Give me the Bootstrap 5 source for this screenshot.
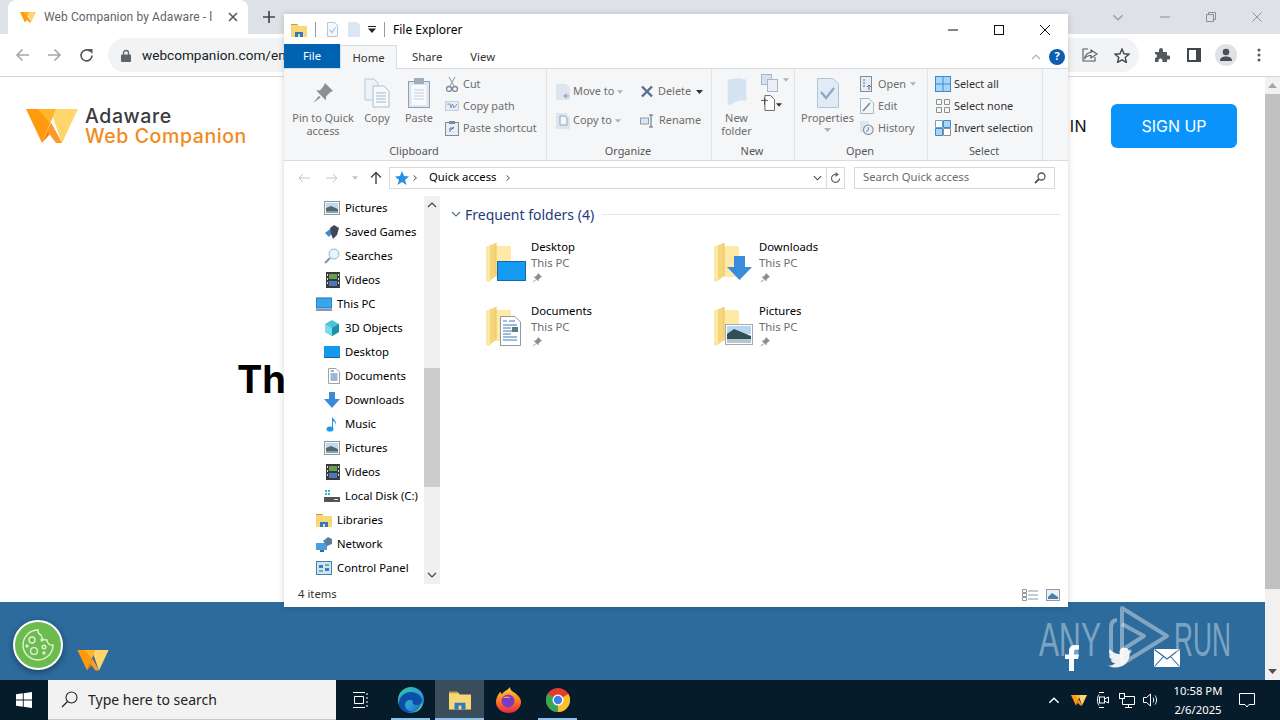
<!DOCTYPE html>
<html lang="en">
<head>
<meta charset="UTF-8">
<title>File Explorer</title>
<link href="https://cdn.jsdelivr.net/npm/bootstrap@5.3.0/dist/css/bootstrap.min.css" rel="stylesheet">
<style>
html, body { width: 1280px; height: 720px; overflow: hidden; margin: 0; background: #fff; }
body { font-family: "Noto Sans", "Liberation Sans", sans-serif; position: relative; }
svg { display: block; flex: none; }

/* small spacing + colour helpers */
.gl1 { margin-left: 1px; } .gl2 { margin-left: 2px; } .gl3 { margin-left: 3px; } .gl5 { margin-left: 5px; }
.gl7 { margin-left: 7px; } .gl9 { margin-left: 9px; } .gl10 { margin-left: 10px; } .gl11 { margin-left: 11px; }
.gl12 { margin-left: 12px; } .gl14 { margin-left: 14px; } .gl16 { margin-left: 16px; } .gl17 { margin-left: 17px; }
.gr4 { margin-right: 4px; }
.cl-mut { color: #9da1a6; } .cl-cap { color: #b0b0b0; } .cl-dim { color: #c3c3c3; } .cl-dk { color: #333; } .cl-sb { color: #444; }
.cl-w { color: #fff; }
.rot { transform: rotate(180deg); }

/* browser */
.br-wrap { height: 680px; }
.br-strip { height: 34px; background: #dee1e6; padding-left: 8px; }
.br-tab { width: 240px; height: 34px; background: #fff; border-radius: 8px 8px 0 0; padding: 0 10px 0 12px; color: #5f6368; }
.br-title { width: 172px; margin-left: 8px; white-space: nowrap; overflow: hidden; font-family: "Roboto", sans-serif; font-size: 12px; letter-spacing: .1px; }
.br-new { margin-left: 14px; }
.br-ctl { margin-left: auto; gap: 36px; padding-right: 18px; }
.br-bar { height: 43px; background: #fff; border-bottom: 1px solid #d3d5d8; padding: 0 15px; }
.br-omni { height: 34px; width: 1031px; margin-left: 14px; background: #f1f3f4; border-radius: 17px; padding: 0 9px 0 13px; }
.br-url { font-family: "Roboto", sans-serif; font-size: 13.6px; color: #202124; margin-left: 11px; white-space: nowrap; }
.br-ext { margin-left: 15px; } .br-pan { margin-left: 17px; }
.br-prof { margin-left: 14px; width: 22px; height: 22px; border-radius: 50%; background: #dfe1e5; }
.br-menu { margin-left: 20px; }
.br-view { height: 603px; }
.pg-main { height: 525px; background: #fff; }
.pg-head { padding: 27px 28px 0 26px; }
.pg-name { font-family: "Inter", sans-serif; font-size: 19.5px; line-height: 20px; font-weight: 500; margin-left: 7px; letter-spacing: .6px; white-space: nowrap; color: #3b3b3e; }
.pg-name span { display: block; color: #f28a1c; }
.pg-signin { margin-left: auto; margin-right: 24px; font-family: "Inter", sans-serif; font-size: 16px; letter-spacing: .5px; color: #111; }
.pg-signup { width: 126px; height: 44px; line-height: 44px; text-align: center; padding: 0; border-radius: 6px; background: #0a94fb; color: #fff; font-family: "Inter", sans-serif; font-size: 16px; text-decoration: none; }
.pg-h { font-family: "Inter", sans-serif; font-weight: 700; font-size: 38px; line-height: 46px; margin: 208px 0 0 237px; color: #000; }
.pg-foot { height: 78px; background: #2c6b9c; position: relative; padding: 48px 85px 0 77px; }
.pg-cookie { position: absolute; left: 13px; top: 18px; width: 50px; height: 50px; border-radius: 50%; background: #6cbb4f; border: 2px solid #fff; box-shadow: 0 2px 6px rgba(0,0,0,.4); }
.pg-wm { position: absolute; left: 1036px; top: 2px; overflow: visible; }
.pg-soc { margin-top: -5px; height: 26px; }
.pg-tw { margin: 0 22px 0 29px; }
.sb-page { width: 15px; background: #f1f1f1; }
.sb-thumb { width: 15px; height: 495px; background: #c1c1c1; }
.sb-btn { height: 17px; }
.sb-up { color: #a3a3a3; } .sb-dn { color: #505050; }

/* explorer window */
.xp { position: absolute; left: 284px; top: 14px; width: 784px; height: 593px; background: #fff; font-size: 11.3px; color: #000; box-shadow: 0 0 6px rgba(0,0,0,.18); }
.xp-title { height: 30px; padding: 1px 0 0 7px; font-size: 12px; }
.xp-sep { width: 1px; height: 15px; background: #9a9a9a; }
.xp-ctl { margin-left: auto; padding-right: 18px; gap: 36px; }
.xp-tabs { height: 24px; color: #333; padding: 1px 3px 0 0; position: relative; z-index: 1; }
.xp-tab { padding: 0 15px; line-height: 24px; }
.xp-file { width: 56px; padding: 0; text-align: center; background: #0063b1; color: #fff; margin-top: -1px; }
.xp-home { width: 57px; padding: 0; text-align: center; background: #f5f6f7; border: 1px solid #dadbdc; border-bottom: 0; height: 24px; }
.xp-view { padding-left: 13px; }
.xp-help { width: 16px; height: 16px; border-radius: 50%; background: #0b5eb0; font-weight: 700; font-size: 11px; margin-left: 8px; }
.xp-rb { height: 93px; background: #f5f6f7; border-top: 1px solid #dadbdc; border-bottom: 1px solid #dadbdc; color: #6d6d6d; font-size: 10.9px; }
.rb-grp { height: 91px; border-right: 1px solid #e2e3e5; }
.rb-body { height: 73px; }
.rb-lbl { text-align: center; color: #555; line-height: 17px; padding-right: 2px; }
.rb-big { padding-top: 6px; text-align: center; line-height: 13px; }
.rb-big .rb-ico { height: 36px; padding-top: 3px; }
.rb-col { padding-top: 4px; }
.rb-row { height: 22px; gap: 4px; white-space: nowrap; }
.rb-row2 { height: 29px; gap: 3px; white-space: nowrap; }
.rb-on { color: #333; }
.rb-on .rb-row { gap: 3px; }
.rb-w263 { width: 263px; } .rb-w165 { width: 165px; } .rb-w83 { width: 83px; } .rb-w133 { width: 133px; } .rb-w115 { width: 115px; }
.rb-b38 { width: 38px; } .rb-b46 { width: 46px; } .rb-b49 { width: 49px; } .rb-b65 { width: 65px; } .rb-b70 { width: 70px; }
.rb-clip { padding-left: 4px; } .rb-smcol { margin-left: 3px; }
.rb-org { padding: 8px 0 0 9px; } .rb-orgl { width: 84px; } .rb-col0 { padding-top: 0; }
.rb-newc { padding-top: 5px; } .rb-newr { height: 21px; }
.rb-sel { padding: 4px 0 0 7px; }
.rb-pin { margin-top: 3px; }
.xp-addr { height: 33px; padding: 0 12px 0 14px; margin-bottom: 2px; }
.xp-box { height: 22px; border: 1px solid #d9d9d9; }
.xp-ab { width: 437px; margin-left: 7px; padding-left: 4px; border-right: 0; }
.xp-rf { width: 19px; }
.xp-sr { width: 201px; margin-left: 9px; padding: 0 8px; color: #6d6d6d; }
.xp-panes { height: 388px; }
.xp-nav { width: 140px; overflow: hidden; }
.xp-row { height: 24px; gap: 5px; white-space: nowrap; }
.xp-l1 { padding-left: 40px; }
.xp-l0 { padding-left: 32px; }
.xp-sb { width: 16px; background: #f0f0f0; position: relative; }
.xp-sb-t { height: 119px; background: #cdcdcd; margin-top: 172px; }
.xp-sb-u { position: absolute; left: 3px; top: 6px; }
.xp-sb-d { position: absolute; left: 3px; bottom: 6px; }
.xp-main { width: 628px; padding: 5px 8px 0 11px; }
.xp-grp { color: #1e3a7e; font-size: 14px; height: 26px; gap: 4px; white-space: nowrap; }
.xp-grp i { flex: 1; height: 1px; background: #e5e5e5; margin-left: 4px; }
.xp-grp svg { color: #5a7596; }
.xp-tiles { display: grid; grid-template-columns: 228px 228px; grid-auto-rows: 64px; padding: 12px 0 0 35px; }
.xp-tile { gap: 5px; line-height: 16px; }
.xp-tile svg.tl-ic { margin-top: 4px; }
.xp-tile svg.tl-pn { margin-top: 1px; }
.xp-sub { color: #6d6d6d; }
.xp-stat { height: 23px; padding: 0 8px 2px 14px; color: #333; }

/* taskbar */
.tb { height: 40px; background: #061c2a; color: #fff; }
.tb-win { width: 48px; }
.tb-search { width: 288px; height: 40px; background: #f2f2f2; color: #222; padding-left: 13px; gap: 10px; font-size: 14px; border-bottom: 1px solid #c8c8c8; }
.tb-app { width: 49px; height: 40px; position: relative; }
.tb-tv { width: 50px; }
.tb-act { background: #3a4d5a; }
.tb-run::after { content: ""; position: absolute; left: 5px; right: 5px; bottom: 0; height: 2px; background: #8cc0ea; }
.tb-act.tb-run::after { left: 0; right: 0; }
.tb-tray { margin-left: auto; }
.tb-cell { width: 24px; }
.tb-clock { font-size: 11.3px; line-height: 19px; text-align: center; width: 70px; margin-left: 0; }
.tb-note { margin: 0 25px 0 6px; }
</style>
</head>
<body>

<svg width="0" height="0" class="position-absolute">
  <defs>
    <symbol id="wmark" viewBox="0 0 52 35">
      <polygon points="0,0 30,0 16,34" fill="#ff9a0d"/>
      <polygon points="24,0 52,0 36,34" fill="#ffd66b"/>
      <polygon points="12,0 30,0 24,14" fill="#ffb52e"/>
      <polygon points="16,34 25,14 36,34 30,25 24,25" fill="#f77f00"/>
      <polygon points="25,14 36,34 30,34 21,22" fill="#fb9a2c"/>
    </symbol>
    <symbol id="pin" viewBox="0 0 12 12">
      <path d="M7 1 11 5 9.600 5.600 7.600 7.600 7.400 9.600 2.600 4.800 4.600 4.600 6.400 2.400Z M4 7.400 1 11 4.800 8.200Z" fill="#8a8f94"/>
    </symbol>
    <symbol id="tlfold" viewBox="0 0 40 40">
      <path d="M4 3H25V34H4Z" fill="#ffe9a6"/>
      <path d="M0 4 10 0V33L2 39 0 37Z" fill="#f6d67a"/>
      <path d="M0 4 4 2.400V36L2 39 0 37Z" fill="#fbe9a9"/>
      <path d="M10 0V33" stroke="#e9c25f" fill="none"/>
    </symbol>
    <symbol id="picsm" viewBox="0 0 16 14">
      <rect x=".5" y=".5" width="15" height="13" fill="#f3f6f8" stroke="#8e9aa4"/>
      <rect x="2" y="2" width="12" height="5" fill="#c4d9e8"/>
      <path d="M2 7 7 5 14 8V12H2Z" fill="#52686f"/>
      <path d="M2 10H14V12H2Z" fill="#8aa0aa"/>
    </symbol>
    <symbol id="vidsm" viewBox="0 0 14 16">
      <rect width="14" height="16" fill="#3b3b3b"/>
      <rect x="3" y="2" width="8" height="5" fill="#68a04a"/>
      <rect x="3" y="9" width="8" height="5" fill="#4a79c4"/>
      <path d="M1 2H2V4H1ZM1 6H2V8H1ZM1 10H2V12H1ZM12 2H13V4H12ZM12 6H13V8H12ZM12 10H13V12H12Z" fill="#ddd"/>
    </symbol>
    <symbol id="docsm" viewBox="0 0 12 16">
      <path d="M.5.5H8L11.500 4V15.500H.5Z" fill="#fff" stroke="#9aa3aa"/>
      <path d="M2.500 3H6M2.500 6H9.500M2.500 8H9.500M2.500 10H9.500M2.500 12H9.500" stroke="#3c6fa8"/>
    </symbol>
    <symbol id="dlsm" viewBox="0 0 16 16">
      <path d="M5 0H11V7H16L8 16 0 7H5Z" fill="#3a8ad8"/>
    </symbol>
    <symbol id="fdsm" viewBox="0 0 16 14">
      <path d="M0 1H6L8 3H16V14H0Z" fill="#f8d775"/>
      <path d="M0 1H6L7 2H0Z" fill="#c89a3b"/>
      <rect x="4" y="9" width="8" height="5" fill="#2f78c4"/>
      <rect x="7" y="11" width="2" height="3" fill="#f8d775"/>
    </symbol>
    <symbol id="chev" viewBox="0 0 10 6">
      <path d="M1 1 5 5 9 1" fill="none" stroke="currentColor" stroke-width="1.200"/>
    </symbol>
    <symbol id="caret" viewBox="0 0 7 4">
      <path d="M0 0H7L3.500 4Z" fill="currentColor"/>
    </symbol>
  </defs>
</svg>

<div class="br-wrap d-flex flex-column">
  <!-- tab strip -->
  <div class="br-strip d-flex align-items-center">
    <div class="br-tab d-flex align-items-center">
      <svg width="16" height="11"><use href="#wmark"/></svg>
      <span class="br-title">Web Companion by Adaware - l</span>
      <svg width="10" height="10" class="ms-auto" viewBox="0 0 10 10"><path d="M1 1 9 9M9 1 1 9" stroke="#55585c" stroke-width="1.600"/></svg>
    </div>
    <svg class="br-new" width="14" height="14" viewBox="0 0 14 14"><path d="M7 1V13M1 7H13" stroke="#44474a" stroke-width="1.700"/></svg>
    <div class="br-ctl d-flex align-items-center">
      <svg width="12" height="7" class="cl-mut"><use href="#chev"/></svg>
      <svg width="10" height="10" viewBox="0 0 10 10"><path d="M0 5H10" stroke="#8b8e92"/></svg>
      <svg width="10" height="10" viewBox="0 0 10 10"><path d="M.5 2.500H7.500V9.500H.5ZM2.500 2.500V.5H9.500V7.500H7.500" fill="none" stroke="#8b8e92"/></svg>
      <svg width="10" height="10" viewBox="0 0 11 11"><path d="M.5.5 10.500 10.500M10.500.5 .5 10.500" stroke="#8b8e92"/></svg>
    </div>
  </div>
  <!-- toolbar -->
  <div class="br-bar d-flex align-items-center">
    <svg width="15" height="14" viewBox="0 0 15 14"><path d="M14 7H2M7.500 1.500 2 7l5.500 5.500" fill="none" stroke="#a3a6aa" stroke-width="1.600"/></svg>
    <svg width="15" height="14" class="gl17" viewBox="0 0 15 14"><path d="M1 7H13M7.500 1.500 13 7l-5.500 5.500" fill="none" stroke="#a3a6aa" stroke-width="1.600"/></svg>
    <svg width="15" height="15" class="gl17" viewBox="0 0 15 15"><path d="M13 7.500A5.500 5.500 0 1 1 11 3.200" fill="none" stroke="#55585c" stroke-width="1.700"/><path d="M8.500 1H13.500V6Z" fill="#55585c"/></svg>
    <div class="br-omni d-flex align-items-center">
      <svg width="10" height="13" viewBox="0 0 10 13"><path d="M2.500 6V4a2.500 2.500 0 0 1 5 0V6" fill="none" stroke="#5f6368" stroke-width="1.300"/><rect y="5.500" width="10" height="7.500" rx="1" fill="#5f6368"/></svg>
      <span class="br-url">webcompanion.com/en</span>
      <svg width="16" height="16" class="ms-auto" viewBox="0 0 16 16"><path d="M9 3 15 7 9 11V8.500C5.500 8.500 3.500 10 2.500 12 3 8 5.500 5.700 9 5.500ZM6 2H1V14H13V10" fill="none" stroke="#55585c" stroke-width="1.100"/></svg>
      <svg width="16" height="15" class="gl16" viewBox="0 0 16 15"><path d="M8 1 10 5.800 15 6.200 11.200 9.500 12.400 14.400 8 11.800 3.600 14.400 4.800 9.500 1 6.200 6 5.800Z" fill="none" stroke="#44474a" stroke-width="1.400"/></svg>
    </div>
    <svg width="16" height="16" class="br-ext" viewBox="0 0 16 16"><path d="M1 5H5V3a2 2 0 0 1 4 0V5H13V8.500h1.500a2 2 0 0 1 0 4H13V15H8.500V13.500a2 2 0 0 0-4 0V15H1V11a2 2 0 0 0 0-4Z" fill="#55585c"/></svg>
    <svg width="14" height="14" class="br-pan" viewBox="0 0 14 14"><path d="M1 1H13V13H1Z" fill="#fff" stroke="#44474a" stroke-width="2"/><rect x="9" y="1" width="4" height="12" fill="#44474a"/></svg>
    <div class="br-prof d-flex align-items-center justify-content-center">
      <svg width="14" height="14" viewBox="0 0 14 14"><circle cx="7" cy="4" r="3.300" fill="#4b4f58"/><path d="M1 13C1 9.500 4 8.500 7 8.500S13 9.500 13 13Z" fill="#4b4f58"/></svg>
    </div>
    <svg width="4" height="14" class="br-menu" viewBox="0 0 4 14"><circle cx="2" cy="2" r="1.500" fill="#55585c"/><circle cx="2" cy="7" r="1.500" fill="#55585c"/><circle cx="2" cy="12" r="1.500" fill="#55585c"/></svg>
  </div>
  <!-- page and its scrollbar -->
  <div class="br-view d-flex">
    <div class="flex-grow-1">
      <div class="pg-main">
        <div class="pg-head d-flex align-items-center">
          <svg width="52" height="35"><use href="#wmark"/></svg>
          <div class="pg-name">Adaware<span>Web Companion</span></div>
          <span class="pg-signin">SIGN IN</span>
          <a class="pg-signup" href="#">SIGN UP</a>
        </div>
        <div class="pg-h">Th</div>
      </div>
      <div class="pg-foot d-flex">
        <div class="pg-cookie d-flex align-items-center justify-content-center">
          <svg width="34" height="34" viewBox="0 0 34 34" fill="none" stroke="#dff2d4" stroke-width="1.400"><path d="M17 2A15 15 0 1 0 32 17 5 5 0 0 1 26 12 6 6 0 0 1 20 7 5 5 0 0 1 17 2Z"/><circle cx="11" cy="12" r="3"/><circle cx="13" cy="23" r="3.400"/><circle cx="23" cy="19" r="1.800"/><circle cx="21" cy="12" r="1" fill="#dff2d4"/><circle cx="23" cy="25" r="1" fill="#dff2d4"/><circle cx="6" cy="18" r="1" fill="#dff2d4"/></svg>
        </div>
        <svg width="32" height="21"><use href="#wmark"/></svg>
        <svg class="pg-wm" width="200" height="70" viewBox="0 4 200 70">
          <g fill="none" stroke="#fff" stroke-opacity=".4" stroke-width="4" stroke-linejoin="round">
            <path d="M81 20C76 20 75 24 75 28V56"/>
            <path d="M86 8 131 36 86 64Z"/>
            <path d="M86 24 108 36 86 50"/>
          </g>
          <text x="3" y="56" font-family="Liberation Sans" font-size="48" fill="#fff" fill-opacity=".4" textLength="62" lengthAdjust="spacingAndGlyphs">ANY</text>
          <text x="138" y="56" font-family="Liberation Sans" font-size="48" fill="#fff" fill-opacity=".4" textLength="57" lengthAdjust="spacingAndGlyphs">RUN</text>
        </svg>
        <div class="pg-soc d-flex ms-auto align-items-center">
          <svg width="14" height="26" viewBox="0 0 14 26"><path d="M4 26V14H0V9.500H4V6C4 2 6.500 0 10 0L14 .3V4.500H11.500C9.500 4.500 9 5.500 9 7V9.500H14L13 14H9V26Z" fill="#fff"/></svg>
          <svg width="24" height="20" class="pg-tw" viewBox="0 0 26 21"><path d="M26 2.500 23 3.500 25.500 .5 22.500 2A5 5 0 0 0 13 6.500C8.500 6.300 4.700 4 2 1 .5 3.500 1.200 6.500 3.500 8L1.200 7.400C1.200 10 3 12 5.500 12.600L3 12.700C3.800 15 5.800 16.200 8 16.300 5.500 18.200 3 19 0 18.700 10 24.500 23.500 18.500 23.500 6Z" fill="#f1f1f1"/></svg>
          <svg width="26" height="18" viewBox="0 0 26 18"><rect width="26" height="18" fill="#fff"/><path d="M.5.5 13 10 25.500.5M.5 17.500 9.500 7.500M25.500 17.500 16.500 7.500" fill="none" stroke="#2c6b9c" stroke-width="1.100"/></svg>
        </div>
      </div>
    </div>
    <div class="sb-page d-flex flex-column">
      <div class="sb-btn d-flex align-items-center justify-content-center"><svg width="9" height="5" class="sb-up rot"><use href="#caret"/></svg></div>
      <div class="sb-thumb"></div>
      <div class="sb-btn mt-auto d-flex align-items-center justify-content-center"><svg width="9" height="5" class="sb-dn"><use href="#caret"/></svg></div>
    </div>
  </div>
</div>

<!-- taskbar -->
<div class="tb d-flex align-items-center">
  <div class="tb-win d-flex align-items-center justify-content-center">
    <svg width="16" height="16" viewBox="0 0 16 16"><path d="M0 2.300 6.800 1.300V7.600H0ZM7.700 1.200 16 0V7.600H7.700ZM0 8.400H6.800V14.700L0 13.700ZM7.700 8.400H16V16L7.700 14.800Z" fill="#fff"/></svg>
  </div>
  <div class="tb-search d-flex align-items-center">
    <svg width="17" height="17" viewBox="0 0 17 17"><circle cx="10.500" cy="6.500" r="5.500" fill="none" stroke="#222" stroke-width="1.100"/><path d="M6.500 10.500 1 16" stroke="#222" stroke-width="1.300"/></svg>
    <span>Type here to search</span>
  </div>
  <div class="tb-app tb-tv d-flex align-items-center justify-content-center">
    <svg width="16" height="16" viewBox="0 0 16 16" fill="none" stroke="#fff"><path d="M0 .5H12M0 15.500H12M1.500 4.500H10.500V11.500H1.500ZM14 1V3M14 5V7M14 9V11M14 13V15"/></svg>
  </div>
  <div class="tb-app tb-run d-flex align-items-center justify-content-center">
    <svg width="26" height="26" viewBox="0 0 26 26"><defs><linearGradient id="eg" x1="0" y1="0" x2="1" y2="1"><stop offset="0" stop-color="#37c8a0"/><stop offset=".6" stop-color="#2a9ad8"/><stop offset="1" stop-color="#0b57b0"/></linearGradient></defs><circle cx="13" cy="13" r="13" fill="url(#eg)"/><path d="M1 15C2 8 8 5 13 5 19 5 24 9 24 14 24 17 21 18 18 18 15 18 14 16 15 14 13 12 7 13 7 18 7 22 11 25 15 25 7 27 0 22 1 15Z" fill="#0b4fa8"/><path d="M24 14C25 20 21 25 15 25 20 24 23 20 24 14Z" fill="#7fe36a"/></svg>
  </div>
  <div class="tb-app tb-run tb-act d-flex align-items-center justify-content-center">
    <svg width="22" height="20" viewBox="0 0 16 14"><use href="#fdsm"/></svg>
  </div>
  <div class="tb-app d-flex align-items-center justify-content-center">
    <svg width="25" height="26" viewBox="0 0 25 26"><defs><linearGradient id="fg" x1="0" y1="0" x2="0" y2="1"><stop offset="0" stop-color="#ffd23b"/><stop offset=".55" stop-color="#ff7a1a"/><stop offset="1" stop-color="#e3264a"/></linearGradient></defs><path d="M2 8C3 6 4 5 5 5 5 6 5 7 6 7 8 4 12 3 14 0 14 3 16 4 19 6 23 9 25 12 25 15A12.500 11 0 0 1 0 15C0 12 1 10 2 8Z" fill="url(#fg)"/><circle cx="12" cy="14" r="6.500" fill="#7a3ac8"/><path d="M7 11C9 9 12 9 15 11 12 11 9 11 7 11Z" fill="#ff9a3c"/></svg>
  </div>
  <div class="tb-app tb-run d-flex align-items-center justify-content-center">
    <svg width="24" height="24" viewBox="0 0 24 24"><circle cx="12" cy="12" r="12" fill="#e33b2e"/><path d="M12 12 22.400 6A12 12 0 0 1 12 24Z" fill="#fbc02d"/><path d="M12 12 12 24A12 12 0 0 1 1.600 6Z" fill="#34a853"/><circle cx="12" cy="12" r="5.500" fill="#fff"/><circle cx="12" cy="12" r="4.200" fill="#3f7fe8"/></svg>
  </div>
  <div class="tb-tray d-flex align-items-center">
    <div class="tb-cell d-flex justify-content-center"><svg width="12" height="7" class="cl-w rot"><use href="#chev"/></svg></div>
    <div class="tb-cell gl1 d-flex justify-content-center"><svg width="16" height="11"><use href="#wmark"/></svg></div>
    <div class="tb-cell d-flex justify-content-center"><svg width="14" height="16" viewBox="0 0 14 16" fill="none" stroke="#fff"><path d="M3 2.500C1 5 1 11 3 13.500M3 .5H8M3 15.500H8"/><rect x="3.500" y="5" width="5" height="6"/><path d="M8.500 7 12.500 5V11L8.500 9"/></svg></div>
    <div class="tb-cell d-flex justify-content-center"><svg width="16" height="15" viewBox="0 0 16 15" fill="none" stroke="#fff"><path d="M3.500 3.500H15.500V11.500H3.500ZM9.500 11.500V14M6 14.500H13"/><rect x=".5" y=".5" width="5" height="5" fill="#061c2a"/></svg></div>
    <div class="tb-cell d-flex justify-content-center"><svg width="16" height="14" viewBox="0 0 16 14" fill="none" stroke="#fff"><path d="M.5 4.500H3.500L7.500 1V13L3.500 9.500H.5ZM10 4.500C11 6 11 8 10 9.500M12 2.500C14 5 14 9 12 11.500"/></svg></div>
    <div class="tb-clock">10:58 PM<br>2/6/2025</div>
    <svg width="16" height="15" class="tb-note" viewBox="0 0 16 15" fill="none" stroke="#fff"><path d="M.5.5H15.500V11.500H10L8 14 6 11.500H.5Z"/></svg>
  </div>
</div>

<!-- explorer window, on top of the browser -->
<div class="xp d-flex flex-column">
  <div class="xp-title d-flex align-items-center">
    <svg width="16" height="14"><use href="#fdsm"/></svg>
    <span class="xp-sep ms-2"></span>
    <svg width="11" height="15" class="gl11" viewBox="0 0 11 15"><path d="M.5.5H7.500L10.500 3.500V14.500H.5Z" fill="#f4f7fb" stroke="#b7c6d6"/><path d="M2.500 8 5 10.500 8.500 5.500" fill="none" stroke="#a9c2da" stroke-width="1.200"/></svg>
    <svg width="12" height="15" class="gl10" viewBox="0 0 12 15"><path d="M0 0H9L12 3V15H0Z" fill="#dbe6f0"/></svg>
    <svg width="8" height="7" class="ms-2" viewBox="0 0 8 7"><path d="M0 .5H8" stroke="#222"/><path d="M0 2.500H8L4 7Z" fill="#222"/></svg>
    <span class="xp-sep ms-2"></span>
    <span class="ms-2">File Explorer</span>
    <div class="xp-ctl d-flex align-items-center">
      <svg width="10" height="10" viewBox="0 0 10 10"><path d="M0 5H10" stroke="#111"/></svg>
      <svg width="10" height="10" viewBox="0 0 10 10"><rect x=".5" y=".5" width="9" height="9" fill="none" stroke="#111"/></svg>
      <svg width="10" height="10" viewBox="0 0 10 10"><path d="M0 0 10 10M10 0 0 10" stroke="#111"/></svg>
    </div>
  </div>

  <div class="xp-tabs d-flex align-items-center">
    <div class="xp-tab xp-file">File</div>
    <div class="xp-tab xp-home">Home</div>
    <div class="xp-tab">Share</div>
    <div class="xp-tab xp-view">View</div>
    <svg width="10" height="6" class="ms-auto cl-cap rot"><use href="#chev"/></svg>
    <div class="xp-help d-flex align-items-center justify-content-center text-white">?</div>
  </div>

  <div class="xp-rb d-flex">
    <!-- Clipboard -->
    <div class="rb-grp rb-w263 d-flex flex-column">
      <div class="rb-body rb-clip d-flex">
        <div class="rb-big rb-b70">
          <div class="rb-ico d-flex justify-content-center align-items-start"><svg width="24" height="24" class="rb-pin"><use href="#pin"/></svg></div>Pin to Quick<br>access
        </div>
        <div class="rb-big rb-b38">
          <div class="rb-ico d-flex justify-content-center"><svg width="26" height="30" viewBox="0 0 26 30"><path d="M1 1H10L14 5V22H1Z" fill="#eef3f8" stroke="#b9c5d1"/><path d="M9 8H20L25 13V29H9Z" fill="#f7fafc" stroke="#aebccb"/><path d="M12 15H22M12 18H22M12 21H22M12 24H22" stroke="#a7b7c6"/></svg></div>Copy
        </div>
        <div class="rb-big rb-b46">
          <div class="rb-ico d-flex justify-content-center"><svg width="22" height="30" viewBox="0 0 22 30"><rect x=".5" y="3.500" width="21" height="26" fill="#dde6f0" stroke="#8fa0b2"/><rect x="3.500" y="7" width="15" height="20" fill="#f8fafc"/><rect x="6" y="0" width="10" height="6" fill="#9fadbb"/><path d="M6 12H16M6 15H16M6 18H16M6 21H16" stroke="#c3cfdb"/></svg></div>Paste
        </div>
        <div class="rb-col rb-smcol">
          <div class="rb-row d-flex align-items-center"><svg width="14" height="16" viewBox="0 0 14 16"><path d="M4 1 9 10M10 1 5 10" stroke="#9aa4ae" stroke-width="1.100"/><circle cx="4" cy="13" r="2.500" fill="none" stroke="#7a8b9b" stroke-width="1.300"/><circle cx="10" cy="13" r="2.500" fill="none" stroke="#7a8b9b" stroke-width="1.300"/></svg>Cut</div>
          <div class="rb-row d-flex align-items-center"><svg width="14" height="10" viewBox="0 0 14 10"><rect x=".5" y=".5" width="13" height="9" fill="#e6edf5" stroke="#c3cedb"/><path d="M2 3H5L6 7 7.500 3 9 7 12 3" fill="none" stroke="#7d96b0"/></svg>Copy path</div>
          <div class="rb-row d-flex align-items-center"><svg width="14" height="15" viewBox="0 0 14 15"><rect x=".5" y="1.500" width="13" height="13" fill="#e7eef5" stroke="#7a8b9b"/><rect x="4" y="0" width="6" height="3" fill="#7a8b9b"/><path d="M5 11V7H9M6 9 9 6" stroke="#5a6c7e" fill="none"/></svg>Paste shortcut</div>
        </div>
      </div>
      <div class="rb-lbl">Clipboard</div>
    </div>
    <!-- Organize -->
    <div class="rb-grp rb-w165 d-flex flex-column">
      <div class="rb-body rb-org d-flex">
        <div class="rb-orgl">
          <div class="rb-row2 d-flex align-items-center"><svg width="14" height="16" viewBox="0 0 14 16"><path d="M0 0H10L14 4V16H0Z" fill="#dde6f0"/><path d="M8 12H13M8 12 10.500 9.500M8 12 10.500 14.500" stroke="#7a8da0" fill="none"/></svg>Move to <svg width="6" height="4" class="cl-cap"><use href="#caret"/></svg></div>
          <div class="rb-row2 d-flex align-items-center"><svg width="14" height="16" viewBox="0 0 14 16"><path d="M0 0H10L14 4V16H0Z" fill="#dde6f0"/><path d="M4 3H9L11 5V12H4Z" fill="#f4f7fa" stroke="#94a5b5"/></svg>Copy to <svg width="6" height="4" class="cl-cap"><use href="#caret"/></svg></div>
        </div>
        <div class="rb-col rb-col0">
          <div class="rb-row2 d-flex align-items-center"><svg width="14" height="13" viewBox="0 0 13 13"><path d="M1.500 1.500 11.500 11.500M11.500 1.500 1.500 11.500" stroke="#54708c" stroke-width="2.400"/></svg><span class="gl1">Delete</span> <svg width="7" height="4" class="cl-dk gl2"><use href="#caret"/></svg></div>
          <div class="rb-row2 d-flex align-items-center"><svg width="15" height="14" viewBox="0 0 15 14"><rect x=".5" y="4" width="8" height="6" fill="#dde6f0" stroke="#8a9dae"/><path d="M11 1V13M9 1H13M9 13H13" stroke="#55697c"/></svg><span class="gl1">Rename</span></div>
        </div>
      </div>
      <div class="rb-lbl">Organize</div>
    </div>
    <!-- New -->
    <div class="rb-grp rb-w83 d-flex flex-column">
      <div class="rb-body d-flex">
        <div class="rb-big rb-b49">
          <div class="rb-ico d-flex justify-content-center"><svg width="20" height="28" viewBox="0 0 20 30"><path d="M0 2 12 0 20 2V24H12L2 29 0 28Z" fill="#d5e2ef"/></svg></div>New<br>folder
        </div>
        <div class="rb-col rb-newc">
          <div class="rb-newr d-flex align-items-start"><svg width="22" height="18" viewBox="0 0 22 18"><rect x=".5" y=".5" width="10" height="10" fill="#d7e1ec" stroke="#aab8c6"/><rect x="6.500" y="5.500" width="10" height="12" fill="#eaf0f6" stroke="#aab8c6"/></svg><svg width="6" height="4" class="mt-1 cl-cap"><use href="#caret"/></svg></div>
          <div class="d-flex align-items-start"><svg width="14" height="16" viewBox="0 0 16 18"><path d="M4.500.5H11L15.500 5V17.500H4.500Z" fill="#fff" stroke="#555"/><path d="M0 6H8M4 3V11" stroke="#444"/></svg><svg width="6" height="4" class="mt-2 cl-dk gl1"><use href="#caret"/></svg></div>
        </div>
      </div>
      <div class="rb-lbl">New</div>
    </div>
    <!-- Open -->
    <div class="rb-grp rb-w133 d-flex flex-column">
      <div class="rb-body d-flex">
        <div class="rb-big rb-b65">
          <div class="rb-ico d-flex justify-content-center"><svg width="22" height="30" viewBox="0 0 22 30"><path d="M.5.5H16L21.500 6V29.500H.5Z" fill="#e0ebf5" stroke="#b2c4d6"/><path d="M4 14 9 20 17 10" fill="none" stroke="#8aa8c5" stroke-width="2.200"/></svg></div>Properties
          <svg width="7" height="4" class="mx-auto mt-1 cl-cap"><use href="#caret"/></svg>
        </div>
        <div class="rb-col">
          <div class="rb-row d-flex align-items-center"><svg width="14" height="16" viewBox="0 0 14 16"><rect x=".5" y=".5" width="11" height="15" fill="#e6edf5" stroke="#7f8d9b"/><path d="M3 4H5M3 7H5M3 10H5" stroke="#54708c"/><path d="M9 14V9M7 11 9 9 11 11" stroke="#54708c" fill="none"/></svg><span>Open</span><svg width="6" height="4" class="cl-cap"><use href="#caret"/></svg></div>
          <div class="rb-row d-flex align-items-center"><svg width="14" height="16" viewBox="0 0 14 16"><path d="M.5.5H9L13.500 5V15.500H.5Z" fill="#f2f6fa" stroke="#a8b7c6"/><path d="M3 13 10 5" stroke="#7a8da0" stroke-width="1.600"/></svg><span>Edit</span></div>
          <div class="rb-row d-flex align-items-center"><svg width="14" height="14" viewBox="0 0 16 16"><rect width="10" height="13" fill="#dce6f0"/><circle cx="9.500" cy="10" r="5.500" fill="#e9eff5" stroke="#7a8da0" stroke-width="1.200"/><path d="M9.500 7V10.500L7 12" stroke="#5a6f83" fill="none"/></svg><span>History</span></div>
        </div>
      </div>
      <div class="rb-lbl">Open</div>
    </div>
    <!-- Select -->
    <div class="rb-grp rb-w115 rb-on d-flex flex-column">
      <div class="rb-body rb-sel">
        <div class="rb-row d-flex align-items-center"><svg width="16" height="16" viewBox="0 0 16 16"><rect width="16" height="16" fill="#3a8ad0"/><path d="M1 1H7.500V7.500H1ZM8.500 1H15V7.500H8.500ZM1 8.500H7.500V15H1ZM8.500 8.500H15V15H8.500Z" fill="#a8d6f6"/></svg>Select all</div>
        <div class="rb-row d-flex align-items-center"><svg width="16" height="16" viewBox="0 0 16 16" fill="none" stroke="#8f8f8f"><path d="M1.500 1.500H6.500V6.500H1.500ZM9.500 1.500H14.500V6.500H9.500ZM1.500 9.500H6.500V14.500H1.500ZM9.500 9.500H14.500V14.500H9.500Z"/></svg>Select none</div>
        <div class="rb-row d-flex align-items-center"><svg width="16" height="16" viewBox="0 0 16 16"><path d="M.5.5H7.500V7.500H.5Z" fill="#fff" stroke="#6f9fcb"/><path d="M8.500.5H15.500V7.500H8.500ZM.5 8.500H7.500V15.500H.5Z" fill="#a8d6f6" stroke="#3a8ad0"/><path d="M8.500 8.500H15.500V15.500H8.500Z" fill="#fff" stroke="#8f8f8f"/></svg>Invert selection</div>
      </div>
      <div class="rb-lbl">Select</div>
    </div>
  </div>

  <div class="xp-addr d-flex align-items-center">
    <svg width="12" height="10" viewBox="0 0 12 10"><path d="M12 5H1M5 1 1 5 5 9" fill="none" stroke="#c3c3c3"/></svg>
    <svg width="12" height="10" class="gl16" viewBox="0 0 12 10"><path d="M0 5H11M7 1 11 5 7 9" fill="none" stroke="#c3c3c3"/></svg>
    <svg width="6" height="4" class="gl14 cl-dim"><use href="#caret"/></svg>
    <svg width="12" height="13" class="gl12" viewBox="0 0 12 13"><path d="M6 13V1.500M1 6.500 6 1.500 11 6.500" fill="none" stroke="#444" stroke-width="1.400"/></svg>
    <div class="xp-box xp-ab d-flex align-items-center">
      <svg width="15" height="14" viewBox="0 0 15 14"><path d="M8 0 10 5 15 5.500 11 9 12.500 14 8 11 3.500 14 5 9 1 5.500 6 5Z" fill="#2a8fe0"/></svg>
      <svg width="4" height="6" class="ms-1" viewBox="0 0 4 6"><path d="M.5.5 3.500 3 .5 5.500" fill="none" stroke="#555"/></svg>
      <span class="gl12">Quick access</span>
      <svg width="4" height="6" class="gl9" viewBox="0 0 4 6"><path d="M.5.5 3.500 3 .5 5.500" fill="none" stroke="#555"/></svg>
      <svg width="9" height="6" class="ms-auto cl-sb gr4"><use href="#chev"/></svg>
    </div>
    <div class="xp-box xp-rf d-flex align-items-center justify-content-center">
      <svg width="11" height="12" viewBox="0 0 11 12"><path d="M9.500 6.500A4 4 0 1 1 7 2.700" fill="none" stroke="#666" stroke-width="1.200"/><path d="M5.500 0 9 2.500 5.500 5Z" fill="#666"/></svg>
    </div>
    <div class="xp-box xp-sr d-flex align-items-center">
      <span>Search Quick access</span>
      <svg width="12" height="12" class="ms-auto" viewBox="0 0 12 12"><circle cx="7.500" cy="4.500" r="3.500" fill="none" stroke="#555" stroke-width="1.300"/><path d="M5 7 1 11" stroke="#555" stroke-width="1.800"/></svg>
    </div>
  </div>

  <div class="xp-panes d-flex">
    <div class="xp-nav">
      <div class="xp-row xp-l1 d-flex align-items-center"><svg width="16" height="14"><use href="#picsm"/></svg>Pictures</div>
      <div class="xp-row xp-l1 d-flex align-items-center"><svg width="16" height="15" viewBox="0 0 16 15"><path d="M1 8 6 4 8 8 5 12Z" fill="#3a8ad0"/><path d="M6 3 10 0 15 3 13 10 9 14 7 9Z" fill="#3f4a55"/></svg>Saved Games</div>
      <div class="xp-row xp-l1 d-flex align-items-center"><svg width="16" height="16" viewBox="0 0 16 16"><circle cx="10" cy="6" r="5" fill="#eaf4fb" stroke="#8fb7d6"/><path d="M6 10 1 15" stroke="#8a8f94" stroke-width="2"/></svg>Searches</div>
      <div class="xp-row xp-l1 d-flex align-items-center"><svg width="16" height="16" viewBox="-1 0 16 16"><use href="#vidsm"/></svg>Videos</div>
      <div class="xp-row xp-l0 d-flex align-items-center"><svg width="16" height="15" viewBox="0 0 16 15"><rect y="1" width="16" height="10" fill="#39a5ec" stroke="#1f6fae"/><path d="M0 13H16" stroke="#8a97a3" stroke-width="2"/></svg>This PC</div>
      <div class="xp-row xp-l1 d-flex align-items-center"><svg width="16" height="16" viewBox="0 0 16 16"><path d="M8 0 15 4V12L8 16 1 12V4Z" fill="#4dc3d9"/><path d="M8 8 15 4V12L8 16Z" fill="#1f8ea8"/><path d="M1 4 8 8V16L1 12Z" fill="#7adbe9"/></svg>3D Objects</div>
      <div class="xp-row xp-l1 d-flex align-items-center"><svg width="16" height="12" viewBox="0 0 16 12"><rect width="16" height="12" fill="#1597ee"/><path d="M0 11.500H16" stroke="#0b64a8"/></svg>Desktop</div>
      <div class="xp-row xp-l1 d-flex align-items-center"><svg width="16" height="16" viewBox="-2 0 16 16"><use href="#docsm"/></svg>Documents</div>
      <div class="xp-row xp-l1 d-flex align-items-center"><svg width="16" height="16"><use href="#dlsm"/></svg>Downloads</div>
      <div class="xp-row xp-l1 d-flex align-items-center"><svg width="16" height="16" viewBox="0 0 16 16"><ellipse cx="6" cy="13" rx="3.500" ry="2.600" fill="#2196e3"/><path d="M8 13V0C8 3 13 4 12 9 11.500 6 10 5.500 9 5V13Z" fill="#2196e3"/></svg>Music</div>
      <div class="xp-row xp-l1 d-flex align-items-center"><svg width="16" height="14"><use href="#picsm"/></svg>Pictures</div>
      <div class="xp-row xp-l1 d-flex align-items-center"><svg width="16" height="16" viewBox="-1 0 16 16"><use href="#vidsm"/></svg>Videos</div>
      <div class="xp-row xp-l1 d-flex align-items-center"><svg width="16" height="14" viewBox="0 0 16 14"><path d="M1 1H3V3H1ZM4 1H6V3H4ZM1 4H3V6H1ZM4 4H6V6H4Z" fill="#35b6cf"/><rect y="8" width="16" height="5" fill="#555"/><path d="M10 10.500H14" stroke="#ddd"/></svg>Local Disk (C:)</div>
      <div class="xp-row xp-l0 d-flex align-items-center"><svg width="16" height="14"><use href="#fdsm"/></svg>Libraries</div>
      <div class="xp-row xp-l0 d-flex align-items-center"><svg width="16" height="15" viewBox="0 0 16 15"><rect y="6" width="11" height="7" fill="#4a9edb"/><path d="M4 14H8" stroke="#2b6ca0" stroke-width="2"/><path d="M7 4 12 0 16 2V7L11 9Z" fill="#5a7da0"/></svg>Network</div>
      <div class="xp-row xp-l0 d-flex align-items-center"><svg width="16" height="14" viewBox="0 0 16 14"><rect x=".5" y=".5" width="15" height="13" fill="#cfe5f5" stroke="#4c7ea8"/><path d="M3 4H7V7H3ZM9 7H13V10H9Z" fill="#2e83c6"/><path d="M9 4H13M3 10H7" stroke="#58a060" stroke-width="1.500"/></svg>Control Panel</div>
    </div>
    <div class="xp-sb d-flex flex-column">
      <svg width="10" height="6" class="xp-sb-u cl-sb rot"><use href="#chev"/></svg>
      <div class="xp-sb-t"></div>
      <svg width="10" height="6" class="xp-sb-d cl-sb"><use href="#chev"/></svg>
    </div>
    <div class="xp-main">
      <div class="xp-grp d-flex align-items-center">
        <svg width="10" height="6"><use href="#chev"/></svg>
        <span>Frequent folders (4)</span><i></i>
      </div>
      <div class="xp-tiles">
        <div class="xp-tile d-flex">
          <svg class="tl-ic" width="40" height="40" viewBox="0 0 40 40"><use href="#tlfold"/><rect x="11.500" y="18.500" width="28" height="19" fill="#169bf3" stroke="#0e6bad"/></svg>
          <div>Desktop<div class="xp-sub">This PC</div><svg width="12" height="12" class="tl-pn"><use href="#pin"/></svg></div>
        </div>
        <div class="xp-tile d-flex">
          <svg class="tl-ic" width="40" height="40" viewBox="0 0 40 40"><use href="#tlfold"/><path d="M20 13H31V24H38L25.500 37 13 24H20Z" fill="#3a8bdb"/></svg>
          <div>Downloads<div class="xp-sub">This PC</div><svg width="12" height="12" class="tl-pn"><use href="#pin"/></svg></div>
        </div>
        <div class="xp-tile d-flex">
          <svg class="tl-ic" width="40" height="40" viewBox="0 0 40 40"><use href="#tlfold"/><path d="M14.500 9.500H29L34.500 15V38.500H14.500Z" fill="#fff" stroke="#8d99a4"/><path d="M17 14H21M23 14H29M17 18H31M17 21H25M17 24H31M17 27H25M17 30H31M17 33H31" stroke="#3f78b8"/><rect x="26" y="20" width="6" height="5" fill="#5f7a86"/></svg>
          <div>Documents<div class="xp-sub">This PC</div><svg width="12" height="12" class="tl-pn"><use href="#pin"/></svg></div>
        </div>
        <div class="xp-tile d-flex">
          <svg class="tl-ic" width="40" height="40" viewBox="0 0 40 40"><use href="#tlfold"/><rect x="11.500" y="17.500" width="27" height="20" fill="#fff" stroke="#a2a9af"/><rect x="13" y="19" width="24" height="8" fill="#b7d6ee"/><path d="M13 27 20 22 37 29V36H13Z" fill="#2f4f55"/><path d="M13 32H37V36H13Z" fill="#b5c6cd"/></svg>
          <div>Pictures<div class="xp-sub">This PC</div><svg width="12" height="12" class="tl-pn"><use href="#pin"/></svg></div>
        </div>
      </div>
    </div>
  </div>

  <div class="xp-stat d-flex align-items-center">
    <span>4 items</span>
    <svg width="16" height="12" class="ms-auto" viewBox="0 0 16 12" fill="none" stroke="#8f9aa5"><path d="M.5.5H4.500V3.500H.5ZM.5 4.500H4.500V7.500H.5ZM.5 8.500H4.500V11.500H.5ZM6 2H16M6 6H16M6 10H16"/></svg>
    <svg width="14" height="12" class="ms-2" viewBox="0 0 14 12"><rect x=".5" y=".5" width="13" height="11" fill="#e8f1f8" stroke="#8f9aa5"/><path d="M2 8 6 4 12 8V10H2Z" fill="#4d7ea5"/></svg>
  </div>
</div>
</body>
</html>
